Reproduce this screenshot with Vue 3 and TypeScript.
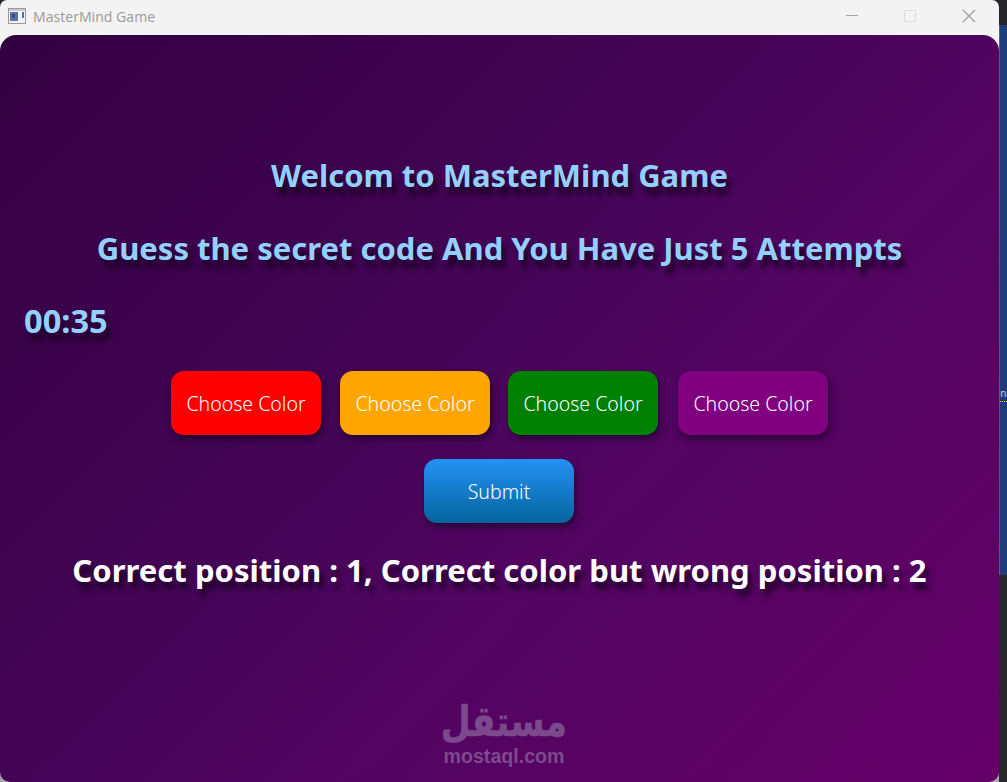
<script setup lang="ts">
const colors: { id: string; bg: string }[] = [
  { id: 'red', bg: '#ff0000' },
  { id: 'orange', bg: '#ffa500' },
  { id: 'green', bg: '#008000' },
  { id: 'purple', bg: '#800080' },
]
</script>

<template>
  <div class="desktop">
    <div class="window">
      <header class="titlebar">
        <div class="app-title">
          <svg class="app-icon" width="18" height="16" viewBox="0 0 18 16">
            <rect x="0.5" y="0.5" width="17" height="15" fill="#f4f4f4" stroke="#9a9a9a" />
            <rect x="1" y="1" width="16" height="2" fill="#c9c9c9" />
            <rect x="2" y="4" width="8" height="9" fill="#5a6fae" />
            <rect x="4" y="6" width="3" height="4" fill="#3b4a86" />
            <rect x="14" y="4" width="2" height="6" fill="#4c6fb0" />
          </svg>
          <span class="app-name">MasterMind Game</span>
        </div>
        <div class="win-controls">
          <svg class="ctl-min" width="14" height="14" viewBox="0 0 14 14"><path d="M1 6.5h12" stroke="#a6a6a6" stroke-width="1" /></svg>
          <svg width="14" height="14" viewBox="0 0 14 14"><rect x="1.5" y="1.5" width="11" height="11" rx="1" fill="none" stroke="#c0c0c0" stroke-dasharray="1 1" /></svg>
          <svg width="14" height="14" viewBox="0 0 14 14"><path d="M1 1l12 12M13 1L1 13" stroke="#9c9c9c" stroke-width="1.2" /></svg>
        </div>
      </header>
      <main class="game">
        <h1 class="heading first">Welcom to MasterMind Game</h1>
        <h1 class="heading second">Guess the secret code And You Have Just 5 Attempts</h1>
        <div class="timer">00:35</div>
        <div class="choices">
          <button v-for="c in colors" :key="c.id" class="btn" :style="{ background: c.bg }">Choose Color</button>
        </div>
        <button class="btn submit">Submit</button>
        <p class="result">Correct position : 1, Correct color but wrong position : 2</p>
        <div class="watermark">
          <span class="wm-ar" lang="ar" dir="rtl">مستقل</span>
          <span class="wm-en">mostaql.com</span>
        </div>
      </main>
    </div>
    <div class="strip">
      <div class="strip-top"></div>
      <div class="strip-blue"><span class="strip-text">n</span></div>
      <div class="strip-dark"></div>
    </div>
  </div>
</template>

<style>
html, body { margin: 0; overflow: hidden; }
</style>

<style scoped>
.desktop {
  width: 1007px;
  height: 782px;
  display: flex;
  overflow: hidden;
  background: #26262a;
  font-family: "Noto Sans", "Open Sans", sans-serif;
}
.window {
  width: 999px;
  height: 782px;
  flex: none;
  display: flex;
  flex-direction: column;
  border-radius: 7px 7px 0 0;
  background: linear-gradient(#f3f3f3 50%, #a8a8a8 50%);
}
.titlebar {
  height: 35px;
  flex: none;
  display: flex;
  justify-content: space-between;
  align-items: center;
  box-sizing: border-box;
  padding: 0 23px 3px 8px;
}
.app-title { display: flex; align-items: center; gap: 7px; }
.app-icon { flex: none; }
.app-name {
  font-size: 14.1px;
  color: #9a9a9a;
  font-family: "Open Sans", sans-serif;
}
.win-controls { display: flex; gap: 45px; align-items: center; }
.win-controls svg { display: block; }
.ctl-min { margin-right: -1px; }
.game {
  position: relative;
  flex: 1;
  border-radius: 16px 16px 10px 10px;
  background: linear-gradient(135deg, #320040 0%, #440556 43%, #4f0560 57%, #640068 100%);
  display: flex;
  flex-direction: column;
  align-items: center;
  box-sizing: border-box;
  padding-top: 116px;
}
.heading {
  margin: 0;
  font-size: 31px;
  line-height: 48px;
  font-weight: 700;
  color: #93d0fd;
  text-shadow: 4px 8px 5px #1e0028;
  white-space: nowrap;
}
.second { margin-top: 25px; }
.timer {
  align-self: flex-start;
  margin: 25px 0 0 24px;
  font-size: 32.6px;
  line-height: 48px;
  font-weight: 700;
  color: #93d0fd;
  text-shadow: 4px 8px 5px #1e0028;
}
.choices {
  margin-top: 26px;
  display: flex;
  gap: 18px;
}
.choices .btn:nth-child(2) { margin-left: 1px; }
.choices .btn:nth-child(4) { margin-left: 2px; }
.btn {
  width: 150px;
  height: 64px;
  border: none;
  border-radius: 13px;
  color: #fff;
  font-family: inherit;
  font-size: 19.5px;
  font-weight: 300;
  padding: 0;
  box-shadow: 2px 4px 6px rgba(20, 0, 30, 0.65);
}
.submit {
  margin-top: 24px;
  margin-right: 1px;
  background: linear-gradient(180deg, #2492f6 0%, #04649c 100%);
}
.result {
  margin: 23px 0 0;
  font-size: 31.05px;
  line-height: 48px;
  font-weight: 700;
  color: #fff;
  text-shadow: 4px 7px 5px #1e0028;
  white-space: nowrap;
}
.watermark {
  position: absolute;
  left: 443px;
  top: 666px;
  width: 122px;
  display: flex;
  flex-direction: column;
  align-items: center;
  color: #7c4a8c;
  pointer-events: none;
}
.wm-ar {
  font-family: "DejaVu Sans", sans-serif;
  font-weight: 700;
  font-size: 42px;
  line-height: 42px;
  transform: scaleX(0.82);
  -webkit-text-stroke: 0.6px #7c4a8c;
  white-space: nowrap;
}
.wm-en {
  font-family: "Liberation Sans", sans-serif;
  font-weight: 700;
  font-size: 19.6px;
  line-height: 20px;
  margin-top: 3px;
}
.strip {
  width: 8px;
  flex: none;
  display: flex;
  flex-direction: column;
}
.strip-top { height: 25px; background: #26262a; }
.strip-blue {
  height: 550px;
  background: #1f3d7a;
  box-sizing: border-box;
  padding-top: 362px;
  border-left: 1px solid #5a5590;
}
.strip-text {
  display: block;
  font-family: "DejaVu Sans Mono", monospace;
  font-size: 11px;
  line-height: 14px;
  color: #b8c4d8;
  border-bottom: 1px dotted #d8c040;
}
.strip-dark { flex: 1; background: #27282c; }
</style>
